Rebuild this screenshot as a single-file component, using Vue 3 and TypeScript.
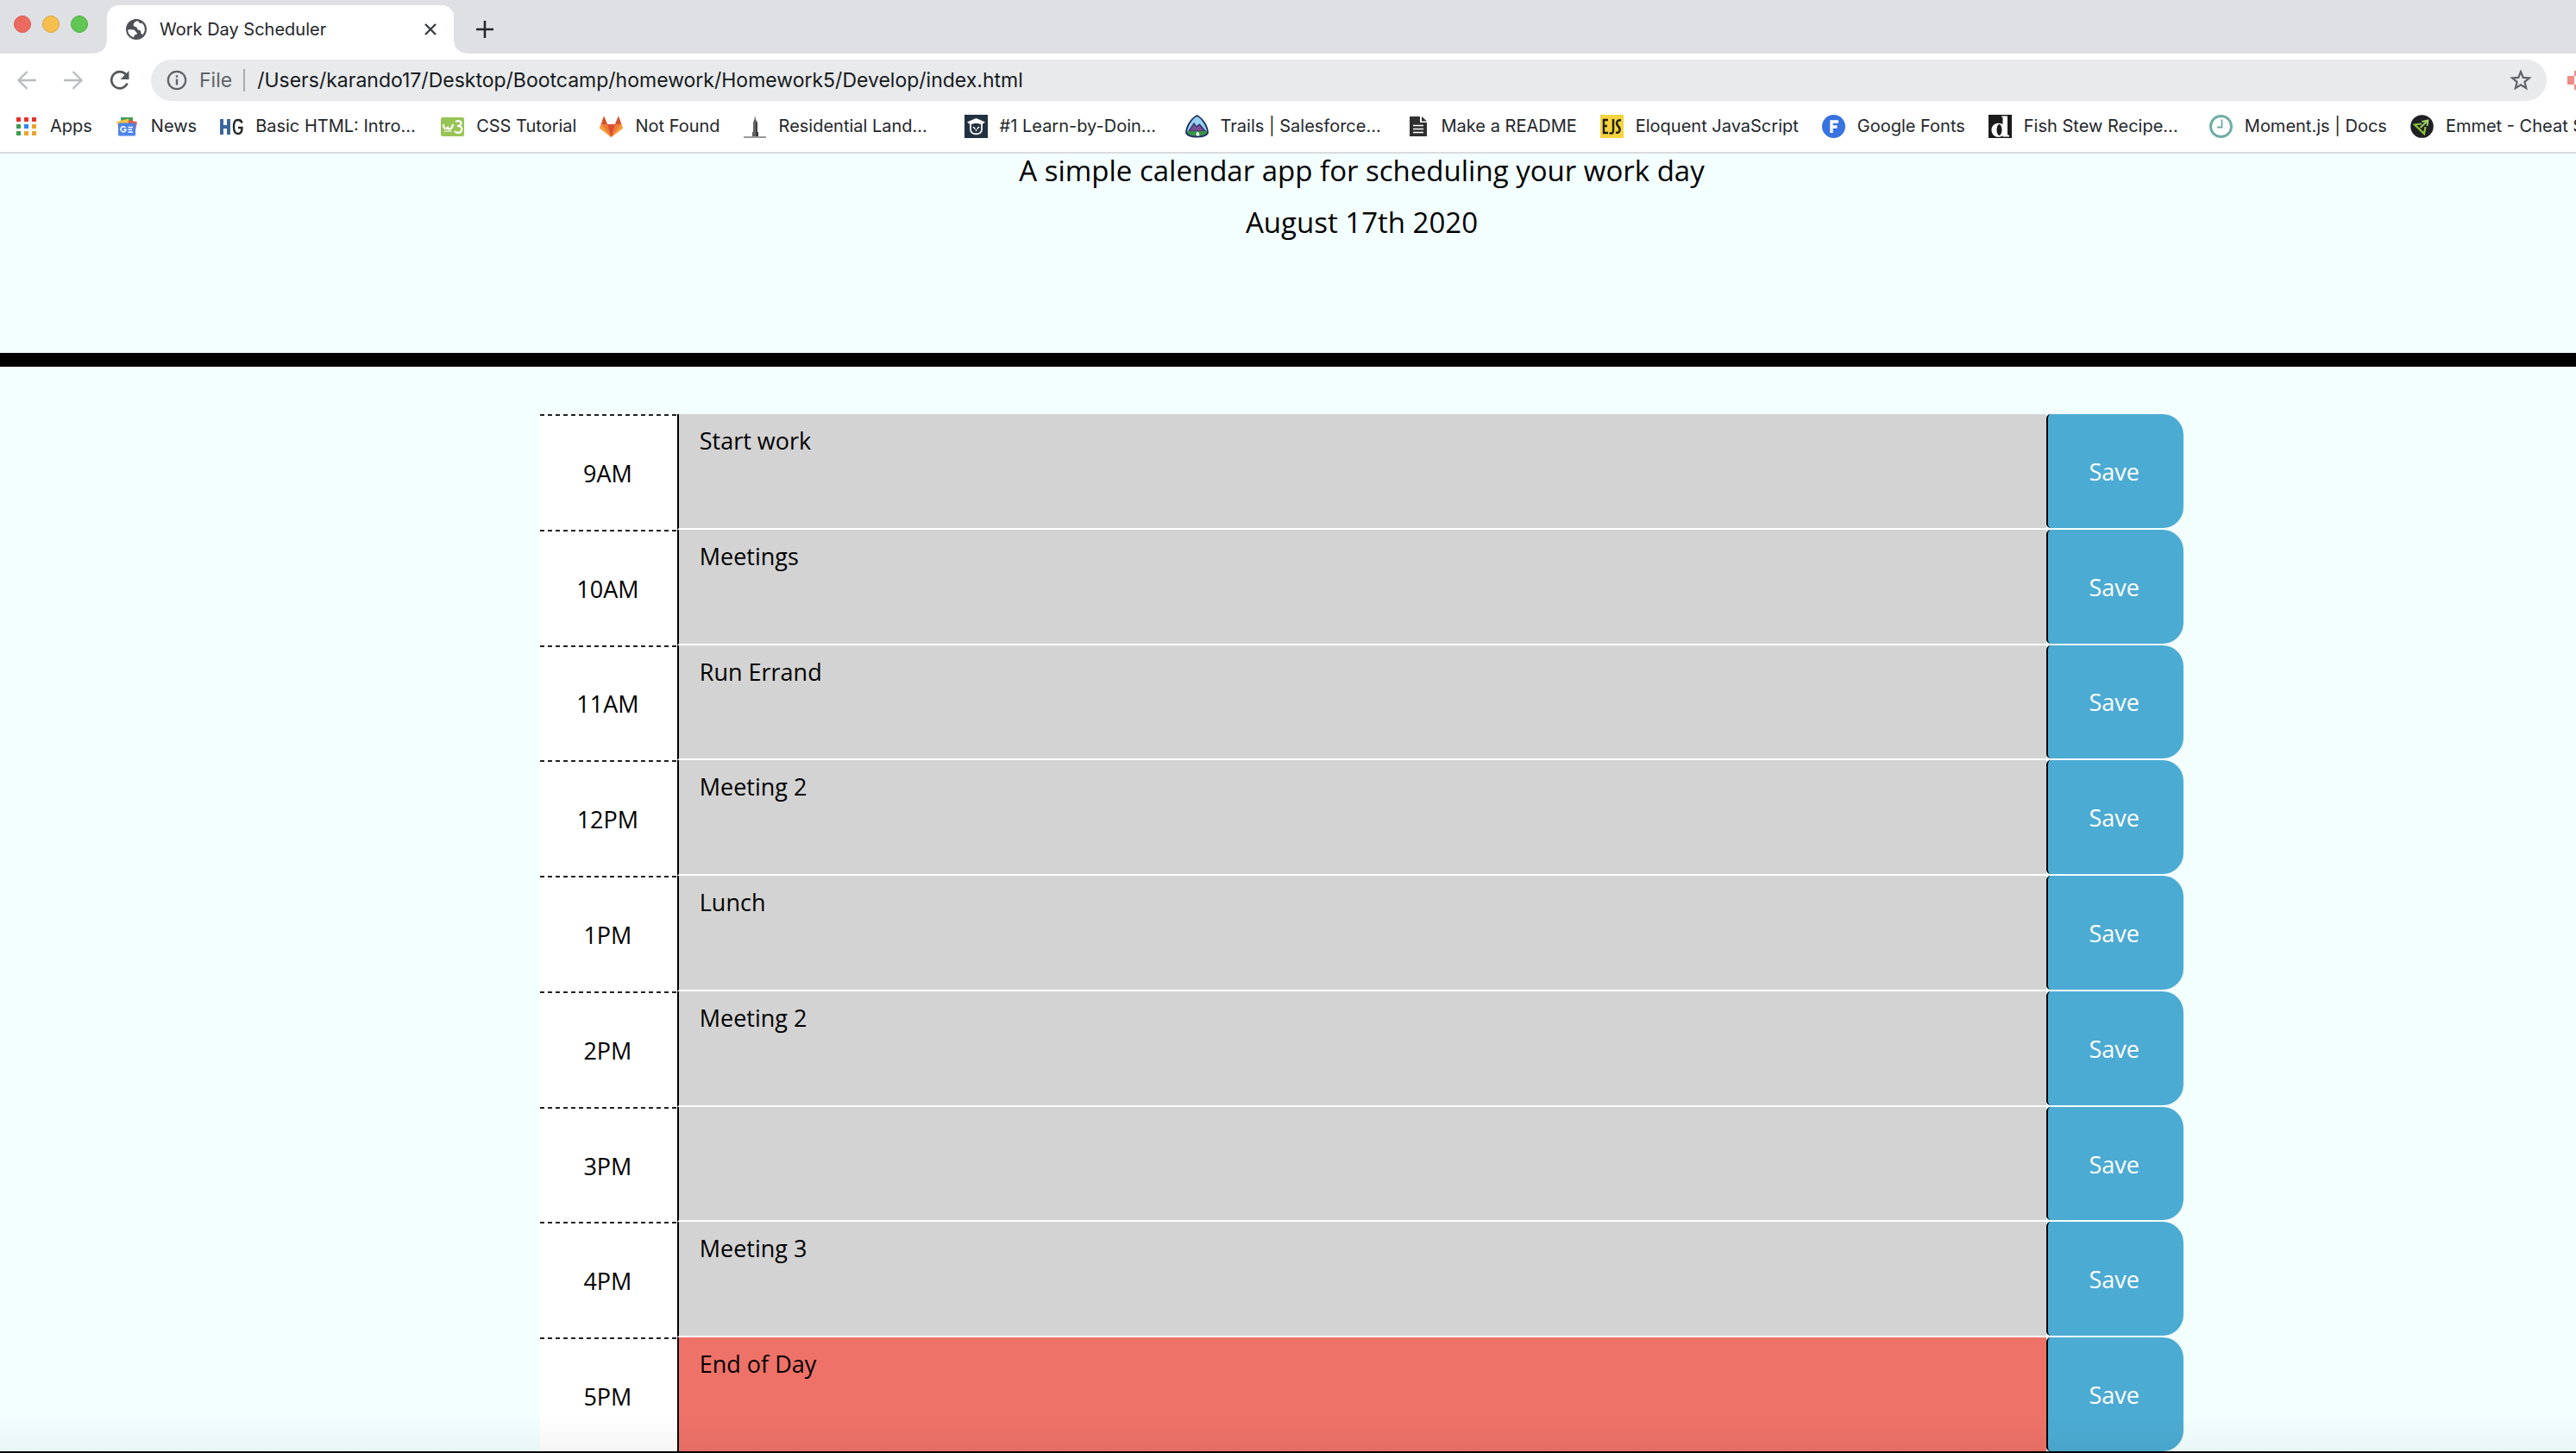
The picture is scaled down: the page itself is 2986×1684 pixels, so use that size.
<script setup lang="ts">
import { ref } from 'vue'

interface Bookmark {
  label: string
  icon: string
  wide?: boolean
}

interface Slot {
  hour: string
  note: string
  state: 'past' | 'present' | 'future'
}

const address = ref('/Users/karando17/Desktop/Bootcamp/homework/Homework5/Develop/index.html')

const bookmarks: Bookmark[] = [
  { label: 'Apps', icon: 'apps' },
  { label: 'News', icon: 'news' },
  { label: 'Basic HTML: Intro...', icon: 'hg', wide: true },
  { label: 'CSS Tutorial', icon: 'w3' },
  { label: 'Not Found', icon: 'fox' },
  { label: 'Residential Land...', icon: 'tower', wide: true },
  { label: '#1 Learn-by-Doin...', icon: 'cap', wide: true },
  { label: 'Trails | Salesforce...', icon: 'trail', wide: true },
  { label: 'Make a README', icon: 'doc' },
  { label: 'Eloquent JavaScript', icon: 'ejs' },
  { label: 'Google Fonts', icon: 'fonts' },
  { label: 'Fish Stew Recipe...', icon: 'dish', wide: true },
  { label: 'Moment.js | Docs', icon: 'clock' },
  { label: 'Emmet - Cheat S', icon: 'emmet' },
]

const slots = ref<Slot[]>([
  { hour: '9AM', note: 'Start work', state: 'past' },
  { hour: '10AM', note: 'Meetings', state: 'past' },
  { hour: '11AM', note: 'Run Errand', state: 'past' },
  { hour: '12PM', note: 'Meeting 2', state: 'past' },
  { hour: '1PM', note: 'Lunch', state: 'past' },
  { hour: '2PM', note: 'Meeting 2', state: 'past' },
  { hour: '3PM', note: '', state: 'past' },
  { hour: '4PM', note: 'Meeting 3', state: 'past' },
  { hour: '5PM', note: 'End of Day', state: 'present' },
])

const appColors = ['#e8312a', '#e8312a', '#e8312a', '#3d9a4f', '#2f86f5', '#eaa42c', '#3d9a4f', '#eaa42c', '#eaa42c']
</script>

<template>
  <div class="window">
    <header class="chrome">
      <div class="tabstrip">
        <div class="lights">
          <button class="light red" aria-label="Close window"></button>
          <button class="light yellow" aria-label="Minimise window"></button>
          <button class="light green" aria-label="Zoom window"></button>
        </div>
        <div class="tab">
          <svg class="globe" viewBox="0 0 24 24" aria-hidden="true">
            <circle cx="12" cy="12" r="12" fill="#4d5156" />
            <path d="M13 2.200C10.500 3.200 8.500 4.800 8.600 6.800C8.700 9 11.500 8.600 12.600 10C13.600 11.200 12.800 12.400 14.500 12.800C16 13.100 17.500 13.500 17.300 15.200C17.100 16.800 18 17.400 19.200 18.200C21 16.500 21.800 14.300 21.800 12C21.800 9 20.500 6.300 18.300 4.500C17.500 5.200 16.500 5.300 15.500 4.500C15.800 3.500 14.600 3 13 2.200z" fill="#fff" />
            <path d="M2.200 12.500C4.500 12.300 8 12.200 9.800 13C11.400 13.700 11.200 15.200 12.600 16C13.600 16.800 12.400 18.200 11 18.300C9.400 18.400 9.600 20 9.200 21.200C5.200 20.200 2.200 16.800 2.200 12.500z" fill="#fff" />
          </svg>
          <span class="tab-title">Work Day Scheduler</span>
          <button class="plain tab-close" aria-label="Close tab">
            <svg viewBox="0 0 14 14" width="14" height="14"><path d="M1 1L13 13M13 1L1 13" stroke="#3c4043" stroke-width="2.400" /></svg>
          </button>
        </div>
        <button class="plain new-tab" aria-label="New tab">
          <svg viewBox="0 0 20 20" width="20" height="20"><path d="M10 0V20M0 10H20" stroke="#24272b" stroke-width="2.600" /></svg>
        </button>
      </div>

      <div class="toolbar">
        <button class="plain nav" aria-label="Back">
          <svg viewBox="0 0 24 24" width="24" height="24" fill="none" stroke="#babcbe" stroke-width="2.400"><path d="M23 12H2.500M12.500 2L2.500 12L12.500 22" /></svg>
        </button>
        <button class="plain nav" aria-label="Forward">
          <svg viewBox="0 0 24 24" width="24" height="24" fill="none" stroke="#babcbe" stroke-width="2.400"><path d="M1 12H21.500M11.500 2L21.500 12L11.500 22" /></svg>
        </button>
        <button class="plain nav" aria-label="Reload">
          <svg viewBox="0 0 24 24" width="24" height="24"><path d="M19.500 6A9.600 9.600 0 1 0 20.600 15.500" fill="none" stroke="#54585c" stroke-width="2.600" /><path d="M22.500 1V11H12.500z" fill="#54585c" /></svg>
        </button>
        <div class="omnibox">
          <svg viewBox="0 0 24 24" width="24" height="24"><circle cx="12" cy="12" r="10.200" fill="none" stroke="#5f6368" stroke-width="2.200" /><path d="M12 10.500V17.500M12 6.300V8.800" stroke="#5f6368" stroke-width="2.400" /></svg>
          <label class="scheme" for="address">File</label>
          <input id="address" v-model="address" class="address" type="text" spellcheck="false" />
          <button class="plain" aria-label="Bookmark this page">
            <svg viewBox="0 0 26 26" width="26" height="26"><path d="M13 3.200L15.700 9.900L22.900 10.400L17.400 15L19.200 22.100L13 18.200L6.800 22.100L8.600 15L3.100 10.400L10.300 9.900Z" fill="none" stroke="#5f6368" stroke-width="2.200" /></svg>
          </button>
        </div>
        <svg class="extension" viewBox="0 0 30 24" aria-hidden="true"><path d="M0 7H8V17H0zM8 1H22V7H8zM8 17H22V23H8zM22 7H30V17H22z" fill="#f18b87" /></svg>
      </div>

      <nav class="bookmarks" aria-label="Bookmarks">
        <a v-for="b in bookmarks" :key="b.label" href="#" class="bookmark" :class="{ wide: b.wide }">
          <svg class="favicon" viewBox="0 0 27 27" aria-hidden="true">
            <template v-if="b.icon === 'apps'">
              <rect v-for="(c, i) in appColors" :key="i" :x="2 + (i % 3) * 9" :y="3 + Math.floor(i / 3) * 8" width="5" height="5" :fill="c" />
            </template>
            <template v-else-if="b.icon === 'news'">
              <path d="M6 3H20V12H6z" fill="#3f9e5b" />
              <path d="M1 8L15 4.500L18 14L4 18z" fill="#f6c343" />
              <path d="M15 6L25 8.500L23 18L14 16z" fill="#e9573f" />
              <rect x="3" y="9.500" width="20" height="15" rx="1.500" fill="#4e84ea" />
              <path d="M11.500 15A3 3 0 1 0 12 17.300H9.500" fill="none" stroke="#fff" stroke-width="1.600" />
              <path d="M14.500 14.500H20M14.500 17.200H19M14.500 20H20" stroke="#fff" stroke-width="1.500" />
            </template>
            <template v-else-if="b.icon === 'hg'">
              <path d="M2 5V23M10 5V23M2 14H10" stroke="#3b679b" stroke-width="4" fill="none" />
              <path d="M25.500 9.500C25 7 23.500 6 21 6C17.500 6 16 8 16 14C16 20 17.500 22 21 22C24 22 25.500 20 25.500 15H21" fill="none" stroke="#24272b" stroke-width="2.400" />
            </template>
            <template v-else-if="b.icon === 'w3'">
              <rect y="3" width="27" height="22" rx="2" fill="#98c455" />
              <path d="M3 11C3 16 5 17 8 15C8 17 13 18 14 11M17 8C21 6 25 8 23 11C22 13 20 13 19 13C24 13 25 16 24 18C23 22 18 21.500 16 19" fill="none" stroke="#fff" stroke-width="2.200" />
              <path d="M4 19H13" stroke="#fff" stroke-width="1.500" stroke-dasharray="1.500 .6" />
            </template>
            <template v-else-if="b.icon === 'fox'">
              <path d="M0 15.500L5 1.500L9 11H18L22 1.500L27 15.500L13.500 26z" fill="#ee7b37" />
              <path d="M9 11H18L13.500 26z" fill="#d9502f" />
              <path d="M5 1.500L9 11H2zM22 1.500L18 11H25z" fill="#d9502f" />
              <path d="M0 15.500L2 11L13.500 26zM27 15.500L25 11L13.500 26z" fill="#f4a23c" />
            </template>
            <template v-else-if="b.icon === 'tower'">
              <path d="M13 1L14 5L16 9V20H17V25H10V20H11V9L12.500 5z" fill="#636363" />
              <path d="M14.500 8L16 9V20H17V25H14.500z" fill="#323232" />
              <path d="M0 26H26" stroke="#777" stroke-width="1.500" />
            </template>
            <template v-else-if="b.icon === 'cap'">
              <rect width="27" height="27" fill="#223140" />
              <path d="M7 11V17C7 24 20 24 20 17V11" fill="none" stroke="#e8eaec" stroke-width="2" />
              <path d="M3 8.500L13.500 4L24 8.500L20 11.500C16 9.500 11 9.500 7 11.500z" fill="#fff" />
              <path d="M10 14L12.500 16.500M17 14L14.500 16.500M13.500 17V19" stroke="#fff" stroke-width="1.500" />
            </template>
            <template v-else-if="b.icon === 'trail'">
              <path d="M13.500 1C20 4 26 14 26 21C23 27 4 27 1 21C1 14 7 4 13.500 1z" fill="#97cdf1" />
              <path d="M4 19L10 10L13 14L16.500 11L23 19z" fill="#7c4b93" stroke="#1c2d5c" stroke-width="1.200" />
              <path d="M1.500 19H25.500V21C21 26 6 26 1.500 21z" fill="#3a9347" />
              <path d="M12 19C16 20 10 22 14 25H17C15 22 18 21 12 19z" fill="#fff" />
              <path d="M13.500 1C20 4 26 14 26 21C23 27 4 27 1 21C1 14 7 4 13.500 1z" fill="none" stroke="#1c2d5c" stroke-width="1.800" />
            </template>
            <template v-else-if="b.icon === 'doc'">
              <path d="M4 2H16V9H24V25H4zM18 2L24 7.500H18z" fill="#303030" />
              <path d="M8 12.500H20M8 16.500H20M8 20.500H20" stroke="#fff" stroke-width="1.500" />
            </template>
            <template v-else-if="b.icon === 'ejs'">
              <rect width="27" height="27" fill="#f5d43f" />
              <path d="M9 6H4V21H9M4 13H8M15 5V19C15 21.500 13 22 10.500 21M24 6.500C19 5 18 10 20.500 13C24 16 23 22 18 20.500" fill="none" stroke="#20200f" stroke-width="2.400" />
            </template>
            <template v-else-if="b.icon === 'fonts'">
              <circle cx="13.500" cy="13.500" r="13.500" fill="#3873e0" />
              <path d="M11 21V8H19M11 14H17.500" fill="none" stroke="#fff" stroke-width="3.400" />
            </template>
            <template v-else-if="b.icon === 'dish'">
              <rect width="27" height="27" fill="#1b1b1b" />
              <path d="M15 1.500H22V23L24 24V25.500H16.500V24C14 27 4 27 3.500 18C3.500 10 11 8 16.500 11V3L15 2.500z" fill="#fff" />
              <ellipse cx="12.500" cy="17.500" rx="3" ry="6.500" fill="#1b1b1b" />
            </template>
            <template v-else-if="b.icon === 'clock'">
              <circle cx="13.500" cy="13.500" r="12" fill="none" stroke="#70ada5" stroke-width="3" />
              <path d="M14.500 5.500V14.500H9" fill="none" stroke="#70ada5" stroke-width="1.800" />
            </template>
            <template v-else>
              <circle cx="13.500" cy="13.500" r="13.300" fill="#1e2023" />
              <path d="M13 10.500L5 11.500L16 22L17.500 14" fill="none" stroke="#8fc33c" stroke-width="2.200" />
              <path d="M13.500 8L20.500 6.500L19.500 13M20 7L11.500 15" fill="none" stroke="#a5d46a" stroke-width="1.800" />
            </template>
          </svg>
          <span>{{ b.label }}</span>
        </a>
      </nav>
    </header>

    <main class="page">
      <section class="intro">
        <p class="lead">A simple calendar app for scheduling your work day</p>
        <p class="lead">August 17th 2020</p>
      </section>

      <div class="planner">
        <form v-for="(slot, i) in slots" :key="slot.hour" class="time-block" @submit.prevent>
          <label class="hour" :for="`note-${i}`">{{ slot.hour }}</label>
          <textarea :id="`note-${i}`" v-model="slot.note" class="note" :class="slot.state" spellcheck="false"></textarea>
          <button class="save" type="submit">Save</button>
        </form>
      </div>
      <div class="edge"></div>
    </main>
  </div>
</template>

<style>
body {
  margin: 0;
}
</style>

<style scoped>
.window,
.window * {
  box-sizing: border-box;
}

.window {
  display: flex;
  flex-direction: column;
  height: 100vh;
  overflow: hidden;
  font-family: Inter, "Liberation Sans", sans-serif;
  color: #24272b;
}

.plain {
  display: flex;
  align-items: center;
  justify-content: center;
  padding: 0;
  border: 0;
  background: none;
}

.chrome {
  flex: none;
  background: #fff;
  border-bottom: 2px solid #dadbde;
}

.tabstrip {
  display: flex;
  height: 62px;
  background: #dee0e4;
}

.lights {
  display: flex;
  gap: 13px;
  width: 124px;
  padding: 18px 0 0 16px;
}

.light {
  width: 20px;
  height: 20px;
  padding: 0;
  border-radius: 50%;
  border: 1px solid;
}

.red {
  background: #ec6a5f;
  border-color: #d9564b;
}

.yellow {
  background: #f5bf4f;
  border-color: #dca73b;
}

.green {
  background: #62c554;
  border-color: #4cae3f;
}

.tab {
  position: relative;
  display: flex;
  align-items: center;
  width: 402px;
  margin-top: 6px;
  padding: 0 18px 0 22px;
  background: #fff;
  border-radius: 14px 14px 0 0;
}

/* Flared feet where the tab meets the toolbar */
.tab::before,
.tab::after {
  content: "";
  position: absolute;
  bottom: 0;
  width: 14px;
  height: 14px;
}

.tab::before {
  right: 100%;
  background: radial-gradient(circle at 0 0, transparent 13px, #fff 14px);
}

.tab::after {
  left: 100%;
  background: radial-gradient(circle at 100% 0, transparent 13px, #fff 14px);
}

.globe {
  width: 24px;
  height: 24px;
}

.tab-title {
  flex: 1;
  margin-left: 15px;
  font-size: 20px;
  line-height: 28px;
}

.tab-close {
  width: 18px;
  height: 18px;
}

.new-tab {
  width: 72px;
  height: 56px;
  margin-top: 6px;
}

.toolbar {
  display: flex;
  align-items: center;
  height: 62px;
  padding-left: 4px;
  overflow: hidden;
}

.nav {
  flex: none;
  width: 54px;
  height: 48px;
}

.omnibox {
  display: flex;
  flex: 1;
  align-items: center;
  height: 48px;
  margin-left: 9px;
  padding: 0 17px 0 18px;
  border-radius: 24px;
  background: #e8eaec;
  font-size: 23px;
}

.scheme {
  margin-left: 14px;
  padding-right: 13px;
  border-right: 2px solid #a8abaf;
  line-height: 26px;
  color: #5f6368;
}

.address {
  flex: 1;
  padding: 0 0 0 14px;
  border: 0;
  background: none;
  font: inherit;
  color: #17191c;
  outline: none;
}

.extension {
  flex: none;
  width: 30px;
  height: 24px;
  margin: 0 -20px 0 24px;
}

.bookmarks {
  display: flex;
  gap: 27px;
  height: 52px;
  padding: 8px 0 0 17px;
  overflow: hidden;
}

.bookmark {
  display: flex;
  flex: none;
  gap: 14px;
  align-items: center;
  height: 28px;
  color: #24272b;
  font-size: 20px;
  line-height: 28px;
  text-decoration: none;
  white-space: nowrap;
}

.bookmark.wide {
  width: 229px;
}

.favicon {
  flex: none;
  width: 27px;
  height: 27px;
}

.page {
  position: relative;
  display: flex;
  flex: 1;
  flex-direction: column;
  min-height: 0;
  padding-left: 171px;
  background: #f3ffff;
  font-family: "Open Sans", sans-serif;
  color: #000;
}

.intro {
  height: 247px;
  margin-left: -171px;
  padding-left: 171px;
  border-bottom: 16px solid #000;
  text-align: center;
}

.lead {
  margin: 0 0 10px;
  font-size: 33px;
  line-height: 50px;
}

.lead:first-child {
  margin-top: -5px;
}

.planner {
  display: flex;
  flex: 1;
  flex-direction: column;
  align-self: center;
  width: 100%;
  max-width: 1905px;
  padding-top: 55px;
}

.time-block {
  display: grid;
  flex: 1;
  grid-template-columns: 1fr 10fr 1fr;
  margin: 0;
  font-size: 27px;
}

.hour {
  display: flex;
  align-items: center;
  justify-content: center;
  padding: 3px 2px 0 0;
  background: repeating-linear-gradient(90deg, #222 0 5px, #fff 5px 9px) top / 100% 2px no-repeat #fff;
}

.note {
  width: 100%;
  height: 100%;
  padding: 11px 24px;
  border: 0;
  border-left: 2px solid #000;
  border-bottom: 2px solid #fff;
  border-radius: 0;
  resize: none;
  outline: none;
  font: inherit;
  line-height: 40px;
  color: #000;
}

.past {
  background: #d3d3d3;
}

.present {
  background: #ee7268;
}

.future {
  background: #77dd77;
}

.save {
  margin-bottom: 2px;
  padding: 1px 4px 0 0;
  border: 0;
  border-left: 2px solid #000;
  border-radius: 5px 24px 24px 5px;
  background: #4cabd3;
  color: #fff;
  font: inherit;
}

/* Soft shade and dark rim along the window's lower edge */
.edge {
  position: absolute;
  inset: auto 0 0;
  height: 44px;
  border-bottom: 2px solid #000;
  background: linear-gradient(transparent, rgba(0, 0, 0, 0.04));
  pointer-events: none;
}
</style>
